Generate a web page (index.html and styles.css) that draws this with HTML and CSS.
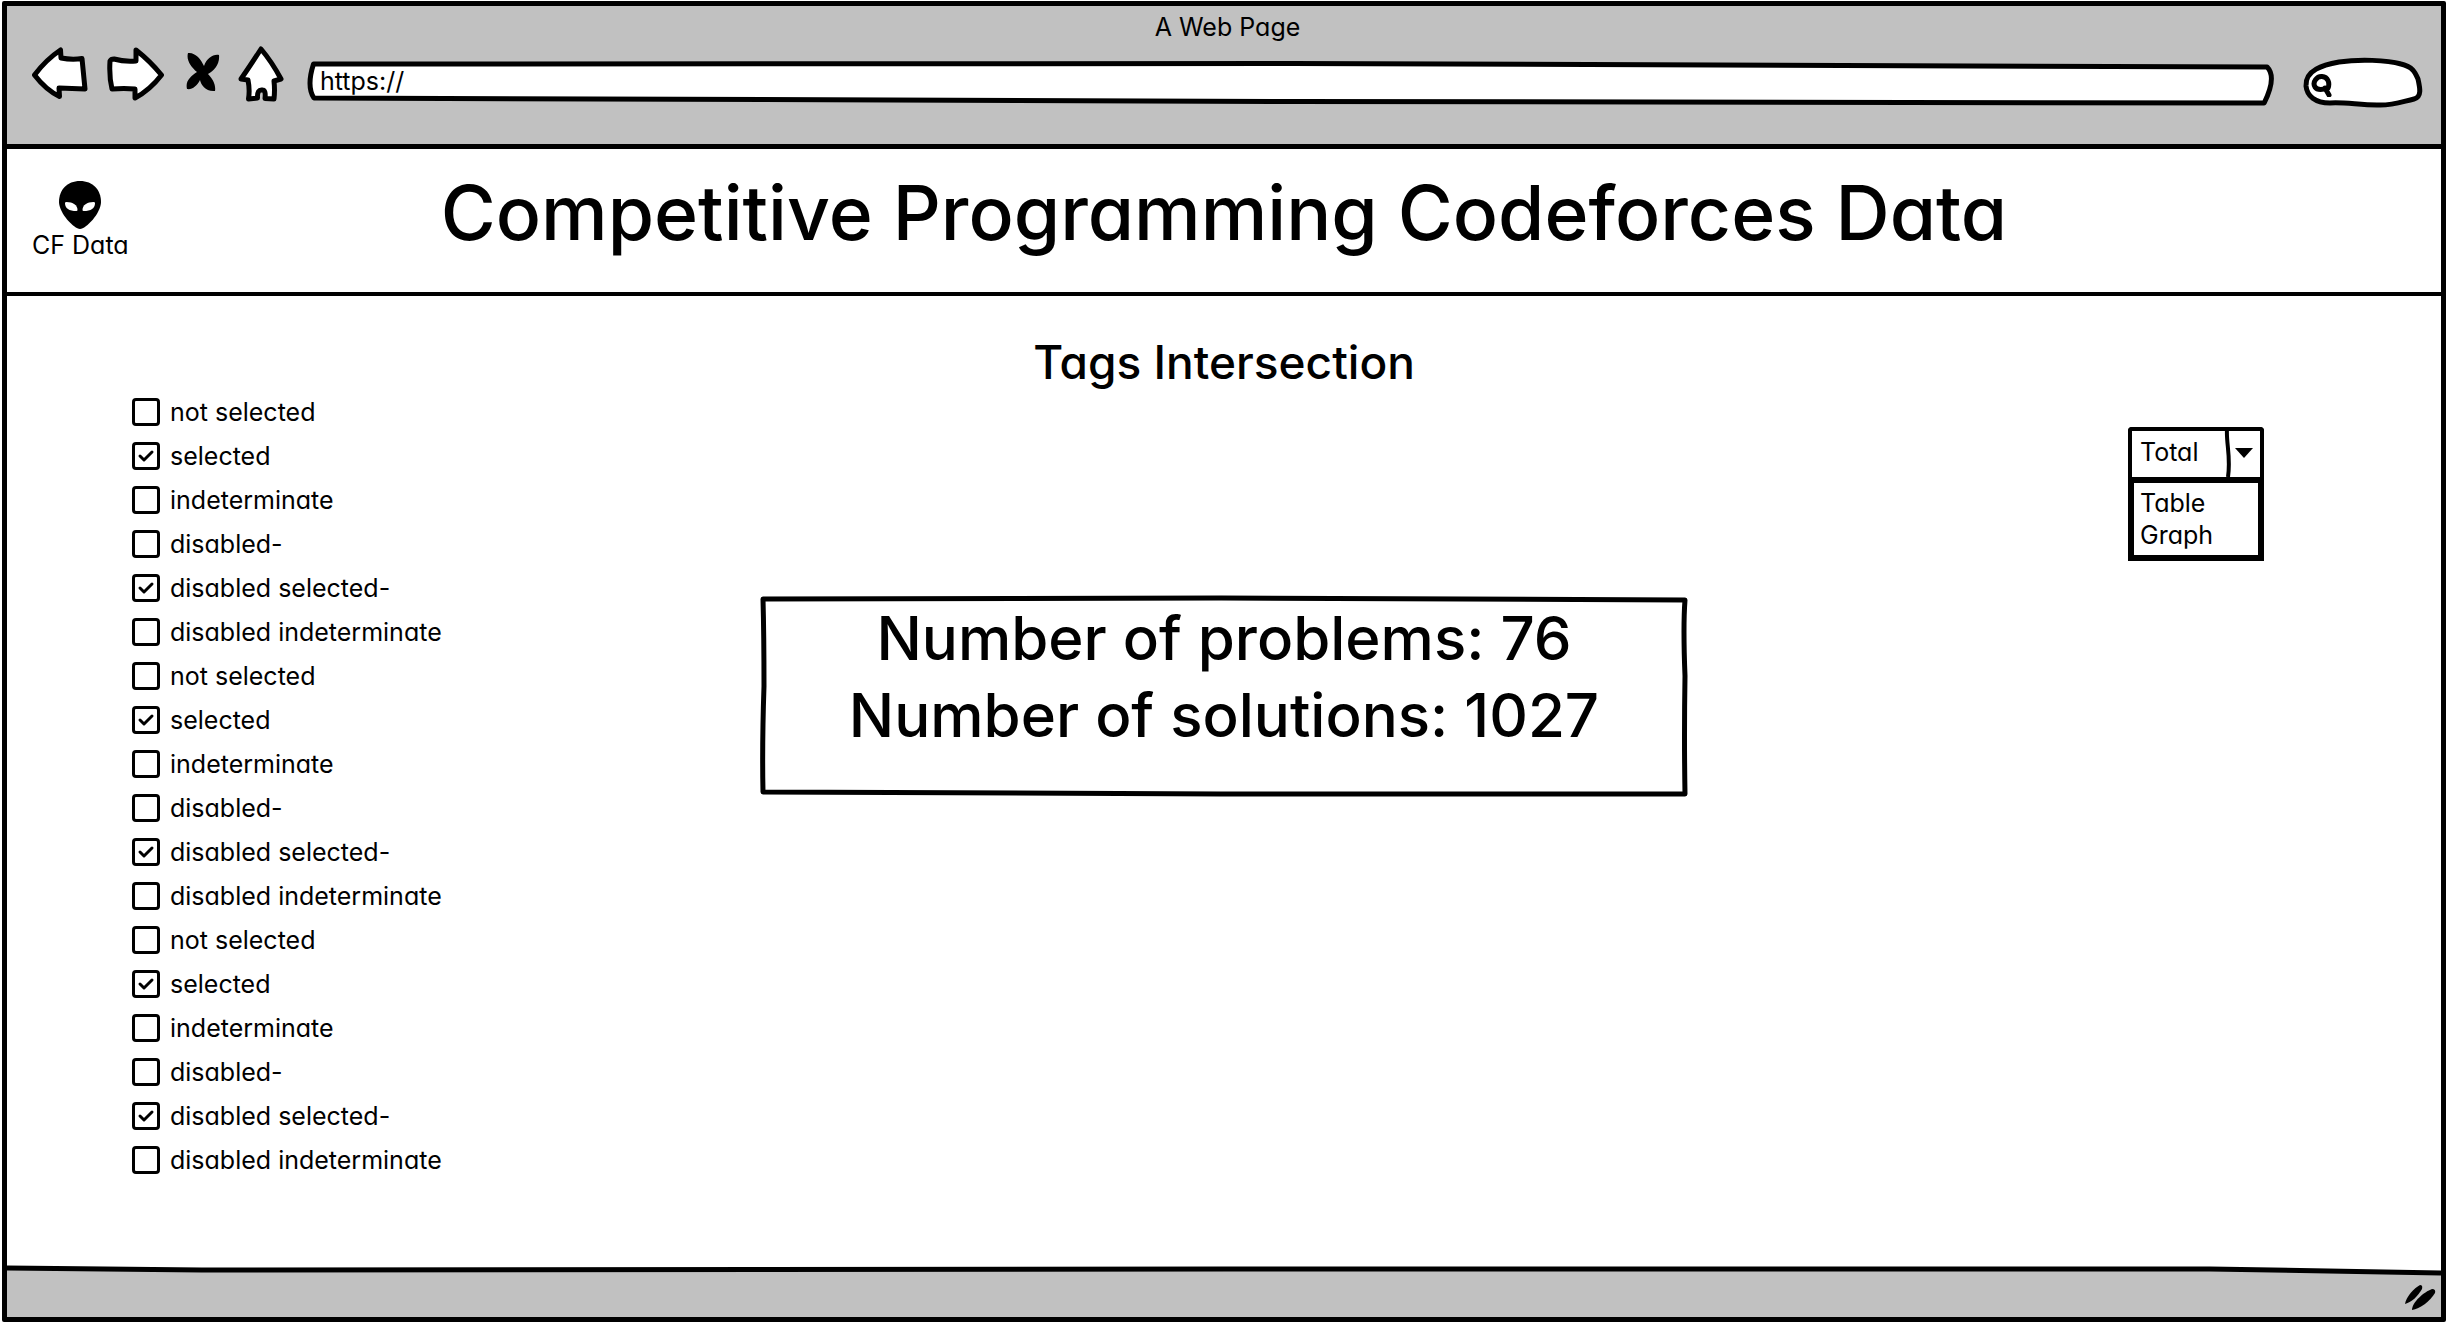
FILE: index.html
```html
<!DOCTYPE html>
<html lang="en">
<head>
<meta charset="utf-8">
<meta name="viewport" content="width=device-width, initial-scale=1">
<title>A Web Page</title>
<link rel="stylesheet" href="styles.css">
</head>
<body>
<div class="browser">
  <div class="toolbar">
    <p class="window-title">A Web Page</p>
    <div class="controls">
      <div class="nav">
        <button class="nav-button" type="button" aria-label="Back">
          <svg class="ink" width="56" height="54" viewBox="0 0 56 54"><path d="M2.500 28 C10 18 18 10 28.500 3 L29 11 Q40 13 50 11.500 L53 42 L27 41 L27.500 49.500 Q14 43 2.500 28Z"/></svg>
        </button>
        <button class="nav-button" type="button" aria-label="Forward">
          <svg class="ink" width="58" height="54" viewBox="0 0 58 54"><path d="M4 14 Q5 12 8 12 Q18 15 30 14 L30 3 Q44 14 55.500 28 Q44 43 29 51 L29 42 Q18 41 6 42 Q3 30 4 14Z"/></svg>
        </button>
        <button class="nav-button" type="button" aria-label="Stop">
          <svg width="34" height="40" viewBox="0 0 34 40"><path d="M2 1 C9 0 15 7 18 14 C21 6 27 2 33 3 C34 12 28 19 22 22 C27 27 30 33 29 39 C20 40 15 33 14 28 C11 34 6 38 1 37 C-1 29 5 24 11 20 C5 15 0 8 2 1Z"/></svg>
        </button>
        <button class="nav-button" type="button" aria-label="Home">
          <svg class="ink" width="46" height="56" viewBox="0 0 46 56"><path d="M23 3 Q34 16 43 33 L36 35 Q37 44 36 53 L27 52.500 Q28 44 24.500 44 Q19 43 19.500 52 L10.500 53 Q12 44 10 34 L3 33 Q12 20 23 3Z"/></svg>
        </button>
      </div>
      <div class="address">
        <svg class="outline" viewBox="0 0 1000 46" preserveAspectRatio="none" aria-hidden="true"><path d="M2.800 3 L500 2.500 L996 6 C999 12 999 24 994.500 42 L500 40.500 L3 37 C0 28 1 14 2.800 3Z"/></svg>
        <input class="address-input" type="text" value="https://" aria-label="Address">
      </div>
      <div class="search">
        <svg class="outline" viewBox="0 0 120 50" preserveAspectRatio="none" aria-hidden="true"><path d="M3 28 C2 12 20 7 36 4 C56 1 84 2 98 6 C110 9 112 14 115 21 C117 30 119 39 111 41 C98 44 88 48 74 47 C56 47 42 44 27 45 C12 45 4 38 3 28Z"/></svg>
        <svg class="ink glass" width="22" height="24" viewBox="0 0 22 24" aria-hidden="true"><path d="M4 14 C1 9 6 3 11 3.500 C17 4 19 10 17 15 C11 17 6 17 4 14Z"/><path d="M14 15 L18 22"/></svg>
        <input class="search-input" type="search" aria-label="Search">
      </div>
    </div>
  </div>

  <header class="site-header">
    <a class="brand" href="#">
      <svg width="42" height="48" viewBox="0 0 42 48" aria-hidden="true"><path d="M21 0 C34 0 42 9 42 21 C42 32 27 48 21 48 C15 48 0 32 0 21 C0 9 8 0 21 0Z"/><path fill="#fff" d="M6 22 Q6 21 7.500 21 C14 21 18.500 24 18.500 29 Q18.500 30 17.500 30 C10 30 6 27.500 6 22Z"/><path fill="#fff" d="M36 22 Q36 21 34.500 21 C28 21 23.500 24 23.500 29 Q23.500 30 24.500 30 C32 30 36 27.500 36 22Z"/></svg>
      <span>CF Data</span>
    </a>
    <h1 class="site-title">Competitive Programming Codeforces Data</h1>
  </header>

  <main class="content">
    <h2 class="section-title">Tags Intersection</h2>
    <form class="panel">
      <div class="tags">
        <label class="tag"><input type="checkbox">not selected</label>
        <label class="tag"><input type="checkbox" checked>selected</label>
        <label class="tag"><input type="checkbox">indeterminate</label>
        <label class="tag"><input type="checkbox" disabled>disabled-</label>
        <label class="tag"><input type="checkbox" checked disabled>disabled selected-</label>
        <label class="tag"><input type="checkbox" disabled>disabled indeterminate</label>
        <label class="tag"><input type="checkbox">not selected</label>
        <label class="tag"><input type="checkbox" checked>selected</label>
        <label class="tag"><input type="checkbox">indeterminate</label>
        <label class="tag"><input type="checkbox" disabled>disabled-</label>
        <label class="tag"><input type="checkbox" checked disabled>disabled selected-</label>
        <label class="tag"><input type="checkbox" disabled>disabled indeterminate</label>
        <label class="tag"><input type="checkbox">not selected</label>
        <label class="tag"><input type="checkbox" checked>selected</label>
        <label class="tag"><input type="checkbox">indeterminate</label>
        <label class="tag"><input type="checkbox" disabled>disabled-</label>
        <label class="tag"><input type="checkbox" checked disabled>disabled selected-</label>
        <label class="tag"><input type="checkbox" disabled>disabled indeterminate</label>
      </div>
      <section class="result">
        <svg class="outline" viewBox="0 0 926 200" preserveAspectRatio="none" aria-hidden="true"><path d="M2 3 L460 2 L924 4 Q922 30 924 80 Q923 140 924 198 L460 198 L2 196 Q1 150 3 90 Q3 40 2 3Z"/></svg>
        <p>Number of problems: 76</p>
        <p>Number of solutions: 1027</p>
      </section>
      <div class="view">
        <div class="view-field">
          <select class="view-select" aria-label="View"><option>Total</option><option>Table</option><option>Graph</option></select>
          <svg class="view-arrow" width="40" height="50" viewBox="0 0 40 50" aria-hidden="true"><path d="M11 21 H29 L20 31Z"/><path class="divider" d="M3 2 C2 16 7 30 4 50"/></svg>
        </div>
        <ul class="view-menu">
          <li>Table</li>
          <li>Graph</li>
        </ul>
      </div>
    </form>
  </main>

  <footer class="status">
    <svg class="status-edge" viewBox="0 0 1000 12" preserveAspectRatio="none" aria-hidden="true"><path class="above" d="M0 0 H1000 V8 L905 4 H500 L80 5 L0 3Z"/><path class="edge" d="M0 3 L80 5 L500 4 H905 L1000 8"/></svg>
    <svg class="grip" width="32" height="26" viewBox="0 0 32 26" aria-hidden="true"><path d="M1 19 C2 12 10 3 16 0 Q19 0 18 4 C14 11 8 17 1 19Z"/><path d="M8 25 C8 17 20 7 28 4 Q32 4 31 8 C26 16 16 24 8 25Z"/></svg>
  </footer>
</div>
</body>
</html>
```
FILE: styles.css
```css
* {
  box-sizing: border-box;
}

body {
  margin: 0;
  background: #fff;
  color: #000;
  font-family: Inter, "Noto Sans", sans-serif;
  font-feature-settings: "cv11";
  font-size: 25px;
  line-height: 32px;
}

h1, h2, p, ul {
  margin: 0;
  padding: 0;
}

input, select, button {
  padding: 0;
  border: 0;
  background: none;
  color: inherit;
  font: inherit;
  font-feature-settings: inherit;
}

.ink {
  fill: #fff;
  stroke: #000;
  stroke-width: 5px;
  stroke-linejoin: round;
  stroke-linecap: round;
}

/* Hand-drawn outline that stretches with the box it surrounds */
.outline {
  position: absolute;
  inset: 0;
  width: 100%;
  height: 100%;
  overflow: visible;
  fill: #fff;
}

.outline path {
  stroke: #000;
  stroke-width: 5px;
  stroke-linejoin: round;
  vector-effect: non-scaling-stroke;
}

.browser {
  display: flex;
  flex-direction: column;
  min-height: calc(100vh - 3px);
  margin: 1px 2px 2px;
  border: 5px solid #000;
  border-radius: 2px;
}

/* Toolbar */
.toolbar {
  padding: 5px 18px 36px 25px;
  border-bottom: 5px solid #000;
  background: #c1c1c1;
}

.window-title {
  text-align: center;
}

.controls {
  display: flex;
  align-items: flex-start;
  gap: 24px;
  margin-top: 3px;
}

.nav {
  display: flex;
  align-items: center;
  gap: 18px;
}

.nav-button,
.nav-button svg {
  display: block;
}

.nav-button:nth-child(3) {
  padding: 0 0 4px 4px;
}

.address {
  position: relative;
  flex: 1;
  height: 46px;
  margin-top: 15px;
}

.address-input {
  position: relative;
  display: block;
  width: 100%;
  height: 40px;
  padding: 0 12px;
}

.search {
  position: relative;
  width: 120px;
  height: 50px;
  margin: 12px 0 0 4px;
}

.glass {
  position: absolute;
  top: 15px;
  left: 8px;
}

.search-input {
  position: relative;
  display: block;
  width: 100%;
  height: 100%;
  padding: 0 16px 0 36px;
}

/* Header */
.site-header {
  display: grid;
  grid-template-columns: 1fr auto 1fr;
  align-items: start;
  padding: 8px 25px 23px;
  border-bottom: 4px solid #000;
}

.brand {
  display: flex;
  flex-direction: column;
  align-items: center;
  justify-self: start;
  margin-top: 24px;
  color: inherit;
  text-decoration: none;
}

.site-title {
  font-size: 75px;
  font-weight: 500;
  line-height: 112px;
}

/* Content */
.content {
  flex: 1;
  padding: 34px 125px 80px;
}

.section-title {
  font-size: 46px;
  font-weight: 500;
  line-height: 64px;
  text-align: center;
}

.panel {
  display: grid;
  grid-template-columns: 1fr minmax(0, 926px) 1fr;
  align-items: start;
  margin-top: -4px;
}

.tag {
  display: flex;
  align-items: center;
  gap: 10px;
  width: max-content;
  height: 44px;
}

.tag input {
  width: 28px;
  height: 28px;
  margin: 0;
  border: 3px solid #000;
  border-radius: 4px;
  appearance: none;
}

.tag input:checked {
  background: url("data:image/svg+xml,%3Csvg xmlns='http://www.w3.org/2000/svg' viewBox='0 0 22 22'%3E%3Cpath d='M5 11l4 4 8-8' fill='none' stroke='%23000' stroke-width='3' stroke-linecap='round' stroke-linejoin='round'/%3E%3C/svg%3E") center / 22px no-repeat;
}

.result {
  position: relative;
  height: 200px;
  margin-top: 206px;
  padding-top: 4px;
  font-size: 60px;
  font-weight: 500;
  line-height: 77px;
  text-align: center;
}

.result p {
  position: relative;
}

.view {
  justify-self: end;
  width: 136px;
  margin: 37px 52px 0 0;
}

.view-field {
  position: relative;
  height: 50px;
  border: 4px solid #000;
  border-bottom: 0;
  border-radius: 4px 4px 0 0;
}

.view-select {
  display: block;
  width: 100%;
  height: 42px;
  padding: 0 40px 0 8px;
  appearance: none;
}

.view-arrow {
  position: absolute;
  top: -4px;
  right: -4px;
  pointer-events: none;
}

.divider {
  fill: none;
  stroke: #000;
  stroke-width: 4px;
}

.view-menu {
  padding: 4px 6px;
  border: 6px solid #000;
  list-style: none;
}

/* Status bar */
.status {
  position: relative;
  display: flex;
  justify-content: flex-end;
  padding: 20px 5px 6px;
  background: #c1c1c1;
}

.status-edge {
  position: absolute;
  top: 0;
  left: 0;
  width: 100%;
  height: 12px;
}

.above {
  fill: #fff;
}

.edge {
  fill: none;
  stroke: #000;
  stroke-width: 5px;
  vector-effect: non-scaling-stroke;
}
```
